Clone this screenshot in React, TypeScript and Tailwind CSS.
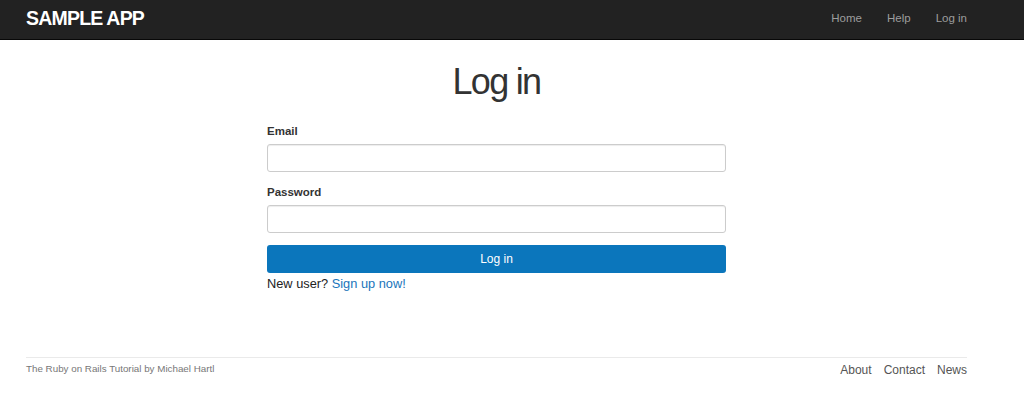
import React from 'react';

const navLinks = ['Home', 'Help', 'Log in'];
const footerLinks = ['About', 'Contact', 'News'];

export default function App() {
  return (
    <div className="min-h-[394px] bg-white text-[#333] font-['Liberation_Sans',Arial,sans-serif]">
      <header className="h-[40px] bg-[#222] border-b border-[#080808]">
        <div className="ml-[26px] w-[941px] flex justify-between items-start">
          <a className="mt-[8px] text-[19.5px] leading-[20px] font-bold tracking-[-0.8px] text-white uppercase">
            Sample app
          </a>
          <nav className="mt-[11px] flex gap-[25px]">
            {navLinks.map((l) => (
              <a key={l} className="text-[11.5px] leading-[14px] text-[#9d9d9d]">
                {l}
              </a>
            ))}
          </nav>
        </div>
      </header>

      <main className="ml-[26px] w-[941px]">
        <h1 className="mt-[22px] text-center text-[36px] leading-[40px] tracking-[-1.7px] text-[#333]">
          Log in
        </h1>
        <form className="mx-auto w-[459px] flex flex-col" onSubmit={(e) => e.preventDefault()}>
          <label className="mt-[22px] text-[11.5px] leading-[14px] font-bold">Email</label>
          <input
            type="email"
            className="mt-[6px] h-[28px] rounded-[3px] border border-[#ccc] shadow-[inset_0_1px_1px_rgba(0,0,0,0.075)] px-2 text-[11.5px] outline-none"
          />
          <label className="mt-[13px] text-[11.5px] leading-[14px] font-bold">Password</label>
          <input
            type="password"
            className="mt-[6px] h-[28px] rounded-[3px] border border-[#ccc] shadow-[inset_0_1px_1px_rgba(0,0,0,0.075)] px-2 text-[11.5px] outline-none"
          />
          <button
            type="submit"
            className="mt-[12px] h-[28px] rounded-[3px] bg-[#0b76bc] text-white text-[12px] leading-[14px]"
          >
            Log in
          </button>
          <p className="mt-[3px] text-[12.8px] leading-[16px] text-[#222]">
            New user? <a className="text-[#1a75bb]">Sign up now!</a>
          </p>
        </form>
      </main>

      <footer className="ml-[26px] mt-[65px] w-[941px] border-t border-[#eaeaea] pt-[5px] flex justify-between items-start">
        <small className="text-[9.8px] leading-[12px] text-[#777]">
          The Ruby on Rails Tutorial by Michael Hartl
        </small>
        <nav className="flex gap-[12px]">
          {footerLinks.map((l) => (
            <a key={l} className="text-[12px] leading-[14px] text-[#555]">
              {l}
            </a>
          ))}
        </nav>
      </footer>
    </div>
  );
}
